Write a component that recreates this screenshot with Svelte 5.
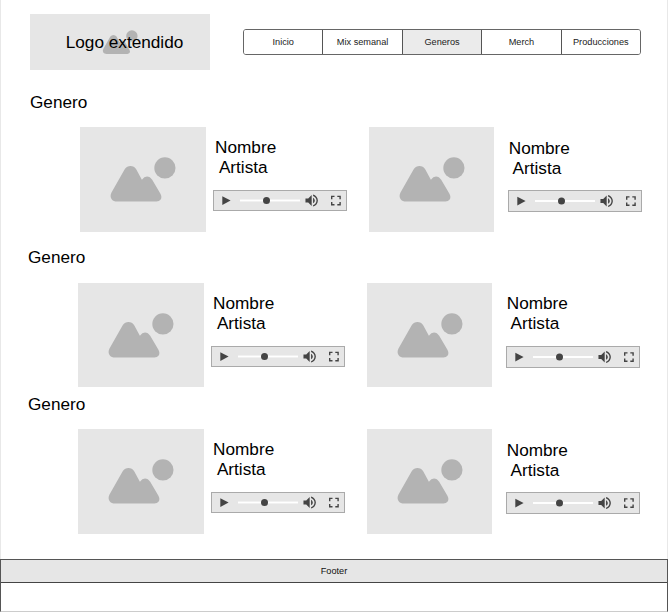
<script>
  const tabs = ['Inicio', 'Mix semanal', 'Generos', 'Merch', 'Producciones'];
  const active = 'Generos';
  const sections = [
    { title: 'Genero', name: 'first', artists: ['Nombre', 'Nombre'] },
    { title: 'Genero', name: 'second', artists: ['Nombre', 'Nombre'] },
    { title: 'Genero', name: 'third', artists: ['Nombre', 'Nombre'] }
  ];
</script>

{#snippet placeholder()}
  <svg class="placeholder" viewBox="0 0 125.4 104.5" aria-hidden="true">
    <circle cx="84.9" cy="40.9" r="10.6" />
    <path d="M44.7 42.2Q47 39 50.5 39Q54 39 56.2 42.2L61.9 52.6Q64.2 49.4 67 49.4Q70 49.4 72.2 52.8L80.3 66.5Q82.3 70.2 80.7 72.4Q79.3 74.5 76.3 74.5H37.5Q33.3 74.5 31.5 71.9Q29.7 69.2 31.5 65.5Z" />
  </svg>
{/snippet}

<div class="page">
  <header>
    <div class="logo">
      {@render placeholder()}
      <span>Logo extendido</span>
    </div>
    <nav>
      {#each tabs as tab}
        <button class:active={tab === active}>{tab}</button>
      {/each}
    </nav>
  </header>

  <main>
    {#each sections as section}
      <section class={section.name}>
        <h2>{section.title}</h2>
        <div class="cards">
          {#each section.artists as artist}
            <article>
              <div class="cover">{@render placeholder()}</div>
              <div class="info">
                <p>{artist}<br /><span class="sub">{' Artista'}</span></p>
                <div class="player">
                  <svg viewBox="0 0 132 18.5" aria-hidden="true">
                    <path class="ink" d="M8.3 4.9L16.6 9.3L8.3 13.7Z" />
                    <rect x="26" y="8.3" width="60" height="1.9" fill="#fff" />
                    <circle class="ink" cx="52.5" cy="9.3" r="3.5" />
                    <path class="ink" transform="translate(89.4 1) scale(.69)" d="M3 9v6h4l5 5V4L7 9H3zm13.5 3c0-1.77-1.02-3.29-2.5-4.03v8.05c1.48-.73 2.5-2.25 2.5-4.02zM14 3.23v2.06c2.89.86 5 3.54 5 6.71s-2.11 5.85-5 6.71v2.06c4.01-.91 7-4.49 7-8.77s-2.99-7.86-7-8.77z" />
                    <path class="ink" transform="translate(113.5 .9) scale(.7)" d="M7 14H5v5h5v-2H7v-3zm-2-4h2V7h3V5H5v5zm12 7h-3v2h5v-5h-2v3zM14 5v2h3v3h2V5h-5z" />
                  </svg>
                </div>
              </div>
            </article>
          {/each}
        </div>
      </section>
    {/each}
  </main>

  <footer>
    <div class="bar">Footer</div>
  </footer>
</div>

<style>
  .page {
    box-sizing: border-box;
    width: 668px;
    height: 612px;
    display: flex;
    flex-direction: column;
    background: #fff;
    color: #000;
    font: 17.2px/20px 'Liberation Sans', Arial, sans-serif;
    overflow: hidden;
  }
  header {
    box-sizing: border-box;
    height: 92px;
    padding: 14px 26px 0 29px;
    display: flex;
    justify-content: space-between;
    align-items: flex-start;
    border: solid #e8e8e8;
    border-width: 0 1px;
  }
  .logo {
    width: 180px;
    height: 56px;
    display: grid;
    place-items: center;
    background: #e6e6e6;
  }
  .logo > :global(*) {
    grid-area: 1 / 1;
  }
  .logo span {
    padding-left: 9px;
  }
  .placeholder {
    display: block;
    width: 100%;
    height: 100%;
    fill: #b3b3b3;
    min-height: 0;
  }
  nav {
    box-sizing: border-box;
    width: 398px;
    height: 26px;
    margin-top: 15px;
    display: flex;
    border: 1px solid #666;
    border-radius: 3px;
    overflow: hidden;
  }
  button {
    flex: 1 1 0;
    min-width: 0;
    padding: 0;
    border: 0;
    border-right: 1px solid #555;
    background: #fff;
    color: #222;
    font: 9.2px/24px 'Liberation Sans', Arial, sans-serif;
    white-space: nowrap;
  }
  button:last-child {
    border-right: 0;
  }
  button.active {
    background: #ebebeb;
  }
  main {
    height: 467px;
    box-sizing: border-box;
    border: solid #e8e8e8;
    border-width: 0 1px;
  }
  section {
    box-sizing: border-box;
    height: 147px;
    padding-left: 27px;
  }
  .first {
    height: 155px;
    padding-left: 29px;
  }
  h2 {
    margin: 0;
    font: inherit;
  }
  .cards {
    display: grid;
    grid-template-columns: 288.7px 288.7px;
    margin: 15.6px 0 0 50.4px;
  }
  .first .cards {
    margin-top: 15.4px;
  }
  .third .cards {
    margin-top: 15px;
  }
  article {
    display: flex;
    align-items: flex-start;
  }
  .cover {
    width: 125.4px;
    height: 104.6px;
    background: #e6e6e6;
  }
  .info {
    width: 134px;
    margin-left: 7px;
    padding-top: 10px;
  }
  p {
    margin: 0 0 13px;
    padding-left: 2.3px;
  }
  .sub {
    white-space: pre;
  }
  .player {
    box-sizing: border-box;
    height: 21px;
    border: 1px solid #aaa;
    background: #e6e6e6;
  }
  article:nth-child(2) .info {
    margin-left: 13.6px;
    padding-top: 11px;
  }
  article:nth-child(2) p {
    padding-left: 0.7px;
    margin-bottom: 12px;
  }
  .second article:nth-child(2) .info {
    padding-top: 10px;
  }
  .second article:nth-child(2) p {
    margin-bottom: 13px;
  }
  article:nth-child(2) .player {
    height: 22px;
  }
  .player svg {
    display: block;
    width: 100%;
    height: 100%;
  }
  .ink {
    fill: #444;
  }
  footer {
    box-sizing: border-box;
    height: 53px;
    border: 1px solid #555;
    border-bottom-color: #ccc;
  }
  .bar {
    height: 22px;
    border-bottom: 1px solid #444;
    background: #e6e6e6;
    color: #111;
    font-size: 9.2px;
    line-height: 23px;
    text-align: center;
  }
</style>
